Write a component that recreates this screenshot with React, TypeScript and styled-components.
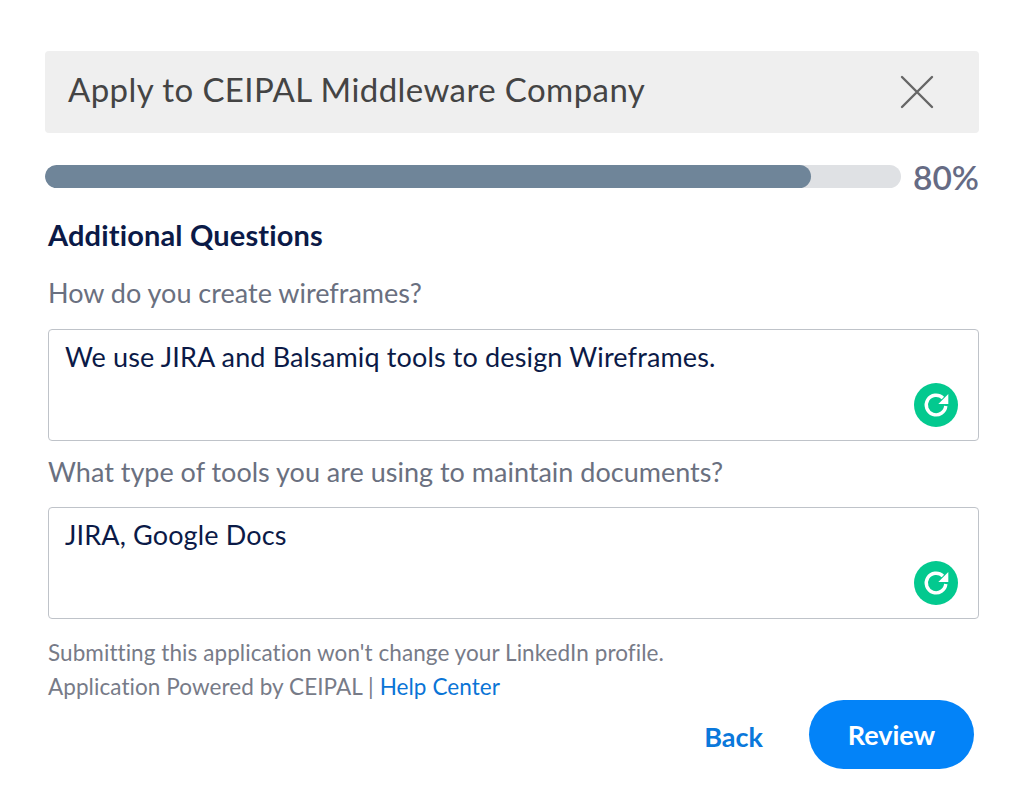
import * as React from 'react'
import styled, { createGlobalStyle } from 'styled-components'

const Global = createGlobalStyle`
  html, body {
    margin: 0;
    padding: 0;
    background: #fff;
  }
  body {
    font-family: 'Lato', 'Liberation Sans', sans-serif;
  }
`

const Page = styled.div`
  width: 1024px;
  height: 796px;
  box-sizing: border-box;
  padding: 51px 45px 0;
  overflow: hidden;
`

const Header = styled.div`
  height: 82px;
  background: #efefef;
  border-radius: 4px;
  display: flex;
  align-items: center;
  justify-content: space-between;
  padding: 0 45px 0 23px;
`

const Title = styled.h1`
  margin: 0;
  padding-bottom: 6px;
  font-size: 33px;
  font-weight: 400;
  color: #444;
  letter-spacing: 0.42px;
`

const CloseButton = styled.div`
  width: 34px;
  height: 34px;
  display: flex;
`

const ProgressRow = styled.div`
  display: flex;
  align-items: flex-start;
  gap: 12px;
  margin-top: 32px;
`

const Track = styled.div`
  flex: 1;
  height: 23px;
  border-radius: 12px;
  background: #dfe1e4;
  overflow: hidden;
`

const Fill = styled.div`
  height: 100%;
  border-radius: 12px;
  background: #6f8599;
`

const Percent = styled.span`
  width: 66px;
  font-size: 33.5px;
  font-weight: 600;
  color: #666b84;
  line-height: 24px;
  padding-bottom: 2px;
`

const Form = styled.div`
  padding-left: 3px;
`

const Heading = styled.h2`
  margin: 27px 0 0;
  font-size: 29px;
  line-height: 34px;
  font-weight: 700;
  letter-spacing: 0.15px;
  color: #0b1a47;
`

const Label = styled.div<{ $first?: boolean }>`
  margin: ${(p) => (p.$first ? '25px 0 20px' : '15px 0 19px')};
  font-size: 27px;
  line-height: 32px;
  color: #6a7080;
`

const AnswerBox = styled.div`
  position: relative;
  box-sizing: border-box;
  height: 112px;
  padding: 10px 16px;
  border: 1px solid #bfc3c9;
  border-radius: 4px;
  font-size: 27px;
  line-height: 34px;
  letter-spacing: 0.14px;
  color: #0b1a47;
`

const RefreshBadge = styled.div`
  position: absolute;
  right: 20px;
  bottom: 13px;
  width: 44px;
  height: 44px;
  border-radius: 50%;
  background: #03c98f;
  display: flex;
  align-items: center;
  justify-content: center;
`

const Notes = styled.div`
  margin-top: 17px;
  font-size: 22.5px;
  line-height: 34px;
  letter-spacing: 0.07px;
  color: #777b88;
`

const HelpLink = styled.span`
  color: #0a74d6;
`

const Actions = styled.div`
  display: flex;
  justify-content: flex-end;
  align-items: center;
  gap: 46px;
  margin-top: -4px;
  padding-right: 5px;
`

const BackLink = styled.span`
  padding-top: 3px;
  font-size: 27px;
  font-weight: 700;
  color: #0a78db;
`

const ReviewButton = styled.div`
  width: 165px;
  height: 69px;
  border-radius: 35px;
  background: #0383f8;
  color: #fff;
  font-size: 27px;
  font-weight: 700;
  display: flex;
  align-items: center;
  justify-content: center;
`

const Refresh = () => (
  <svg width="28" height="28" viewBox="0 0 28 28" fill="none">
    <path
      d="M23.8 15A9.8 9.8 0 1 1 20.9 7"
      stroke="#fff"
      strokeWidth="3.4"
    />
    <path d="M26.3 3v10h-10z" fill="#fff" />
  </svg>
)

const Close = () => (
  <svg width="34" height="34" viewBox="0 0 34 34">
    <path
      d="M2 2l30 30M32 2L2 32"
      stroke="#666"
      strokeWidth="2.4"
      strokeLinecap="round"
    />
  </svg>
)

const questions = [
  {
    label: 'How do you create wireframes?',
    answer: 'We use JIRA and Balsamiq tools to design Wireframes.',
  },
  {
    label: 'What type of tools you are using to maintain documents?',
    answer: 'JIRA, Google Docs',
  },
]

const App = () => {
  return (
    <Page>
      <Global />
      <Header>
        <Title>Apply to CEIPAL Middleware Company</Title>
        <CloseButton>
          <Close />
        </CloseButton>
      </Header>
      <ProgressRow>
        <Track>
          <Fill style={{ width: '89.5%' }} />
        </Track>
        <Percent>80%</Percent>
      </ProgressRow>
      <Form>
        <Heading>Additional Questions</Heading>
        {questions.map((q, i) => (
          <React.Fragment key={q.label}>
            <Label $first={i === 0}>{q.label}</Label>
            <AnswerBox>
              {q.answer}
              <RefreshBadge>
                <Refresh />
              </RefreshBadge>
            </AnswerBox>
          </React.Fragment>
        ))}
        <Notes>
          Submitting this application won't change your LinkedIn profile.
          <br />
          Application Powered by CEIPAL | <HelpLink>Help Center</HelpLink>
        </Notes>
        <Actions>
          <BackLink>Back</BackLink>
          <ReviewButton>Review</ReviewButton>
        </Actions>
      </Form>
    </Page>
  )
}

export default App
